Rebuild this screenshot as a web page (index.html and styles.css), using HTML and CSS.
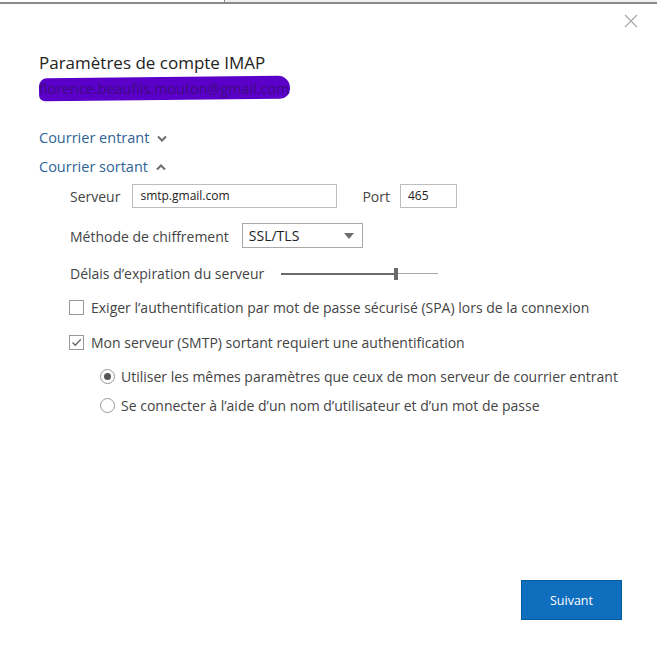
FILE: index.html
```html
<!DOCTYPE html>
<html lang="fr">
<head>
    <meta charset="UTF-8">
    <title>Paramètres de compte IMAP</title>
    <link rel="stylesheet" href="styles.css">
</head>
<body>
    <div class="topbar"><span class="topbar-right"></span></div>

    <div class="dialog">
        <!-- bouton fermer -->
        <button class="close" aria-label="Fermer">
            <svg width="14" height="14" viewBox="0 0 14 14"><path d="M1 1 L13 13 M13 1 L1 13" stroke="#a6a6a6" stroke-width="1.2" fill="none"/></svg>
        </button>

        <h1 class="title">Paramètres de compte IMAP</h1>
        <div class="email"><span class="scribble"></span><span class="email-text">florence.beaufils.mouton@gmail.com</span></div>

        <div class="section">
            <a href="#" class="toggle">Courrier entrant
                <svg width="10" height="7" viewBox="0 0 10 7"><path d="M1 1.5 L5 5.5 L9 1.5" stroke="#6d6d6d" stroke-width="2" fill="none"/></svg>
            </a>
            <a href="#" class="toggle">Courrier sortant
                <svg width="10" height="7" viewBox="0 0 10 7"><path d="M1 5.5 L5 1.5 L9 5.5" stroke="#6d6d6d" stroke-width="2" fill="none"/></svg>
            </a>
        </div>

        <div class="settings">
            <div class="row">
                <label class="lbl">Serveur</label>
                <div class="field server">smtp.gmail.com</div>
                <label class="lbl port-lbl">Port</label>
                <div class="field port">465</div>
            </div>

            <div class="row">
                <label class="lbl">Méthode de chiffrement</label>
                <div class="select">SSL/TLS
                    <svg width="10" height="6" viewBox="0 0 10 6"><path d="M0 0 H10 L5 6 Z" fill="#6d6d6d"/></svg>
                </div>
            </div>

            <div class="row slider-row">
                <label class="lbl">Délais d’expiration du serveur</label>
                <div class="slider"><span class="fill"></span><span class="thumb"></span><span class="rest"></span></div>
            </div>

            <div class="check-row">
                <span class="box"></span>
                <span class="lbl">Exiger l’authentification par mot de passe sécurisé (SPA) lors de la connexion</span>
            </div>
            <div class="check-row">
                <span class="box">
                    <svg width="13" height="13" viewBox="0 0 13 13"><path d="M2.5 6.5 L5.3 9.3 L10.8 3.3" stroke="#666" stroke-width="1.3" fill="none"/></svg>
                </span>
                <span class="lbl">Mon serveur (SMTP) sortant requiert une authentification</span>
            </div>

            <div class="radios">
                <div class="radio-row">
                    <span class="radio on"></span>
                    <span class="lbl">Utiliser les mêmes paramètres que ceux de mon serveur de courrier entrant</span>
                </div>
                <div class="radio-row">
                    <span class="radio"></span>
                    <span class="lbl">Se connecter à l’aide d’un nom d’utilisateur et d’un mot de passe</span>
                </div>
            </div>
        </div>

        <div class="footer">
            <button class="btn-next">Suivant</button>
        </div>
    </div>
</body>
</html>
```

FILE: styles.css
```css
/* Base */
body {
    margin: 0;
    background: #fff;
    font-family: "Open Sans", "Noto Sans", sans-serif;
    color: #333;
}

/* Bande du haut (fenêtre derrière) */
.topbar {
    height: 2px;
    border-bottom: 2px solid #8a8a8a;
    display: flex;
    justify-content: flex-end;
}

.topbar-right {
    width: 432px;
    background: #f0f0f0;
    border-left: 1px solid #8a8a8a;
}

.dialog {
    position: relative;
    height: 649px;
    padding: 0 39px;
    box-sizing: border-box;
}

.close {
    position: absolute;
    top: 10px;
    right: 19px;
    border: none;
    background: none;
    padding: 0;
    width: 14px;
    height: 14px;
    display: flex;
}

.title {
    margin: 0;
    padding-top: 47px;
    font-size: 17px;
    font-weight: 400;
    color: #222;
    line-height: 24px;
}

/* Adresse masquée au feutre */
.email {
    position: relative;
    height: 26px;
    margin-top: 2px;
}

.scribble {
    position: absolute;
    left: 0;
    top: 0;
    width: 251px;
    height: 23px;
    background: #5a00c9;
    border-radius: 8px 12px 10px 6px;
    transform: rotate(-0.6deg);
}

.email-text {
    position: relative;
    font-size: 14.4px;
    line-height: 24px;
    color: #3f0b7e;
}

.section {
    margin-top: 24px;
    display: flex;
    flex-direction: column;
    gap: 7px;
}

.toggle {
    color: #2e6396;
    text-decoration: none;
    font-size: 14.5px;
    line-height: 22px;
    display: flex;
    align-items: center;
    gap: 8px;
}

.settings {
    padding-left: 31px;
    margin-top: 6px;
}

.lbl {
    font-size: 14px;
    color: #444;
    white-space: nowrap;
}

.row {
    display: flex;
    align-items: center;
    margin-bottom: 16px;
}

.field {
    height: 22px;
    border: 1px solid #bdbdbd;
    font-size: 12px;
    line-height: 22px;
    padding: 0 7px;
    color: #222;
    box-sizing: content-box;
}

.server {
    width: 189px;
    margin-left: 12px;
}

.port-lbl {
    margin-left: 25px;
}

.port {
    width: 41px;
    margin-left: 10px;
}

.select {
    width: 105px;
    height: 23px;
    margin-left: 13px;
    border: 1px solid #a9a9a9;
    padding: 0 8px 0 6px;
    display: flex;
    align-items: center;
    justify-content: space-between;
    font-size: 14px;
    color: #222;
    margin-top: -1px;
}

.slider-row {
    margin-bottom: 15px;
}

.slider {
    display: flex;
    align-items: center;
    margin-left: 17px;
    width: 157px;
}

.slider .fill {
    width: 113px;
    height: 2px;
    background: #6a6a6a;
}

.slider .thumb {
    width: 4px;
    height: 12px;
    background: #6a6a6a;
}

.slider .rest {
    flex: 1;
    height: 1px;
    background: #a8a8a8;
}

.check-row {
    display: flex;
    align-items: center;
    gap: 7px;
    margin-left: -1px;
    margin-bottom: 16px;
}

.box {
    width: 13px;
    height: 13px;
    border: 1px solid #999;
    display: flex;
}

.radios {
    padding-left: 30px;
    margin-top: -1px;
}

.radio-row {
    display: flex;
    align-items: center;
    gap: 6px;
    margin-bottom: 10px;
}

.radio {
    width: 13px;
    height: 13px;
    border: 1px solid #999;
    border-radius: 50%;
    position: relative;
}

.radio.on::after {
    content: "";
    position: absolute;
    left: 3px;
    top: 3px;
    width: 7px;
    height: 7px;
    border-radius: 50%;
    background: #555;
}

.footer {
    position: absolute;
    right: 35px;
    bottom: 33px;
}

.btn-next {
    width: 101px;
    height: 40px;
    background: #106ebe;
    border: 1px solid #005a9e;
    color: #fff;
    font-family: inherit;
    font-size: 12.5px;
}
```
